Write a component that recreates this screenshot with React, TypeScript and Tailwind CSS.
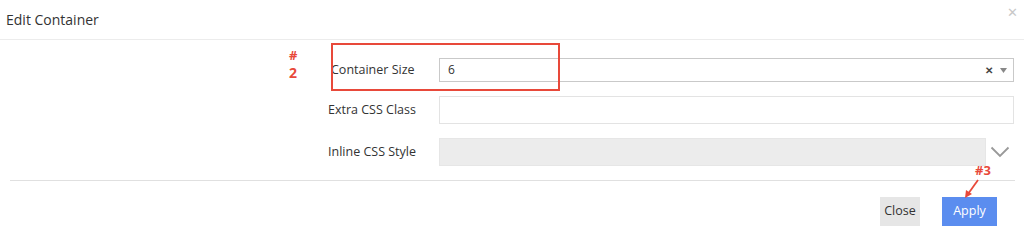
import React from "react";

export default function App() {
  return (
    <div className="relative w-[1024px] h-[243px] bg-white text-[#333] overflow-hidden" style={{ fontFamily: '"Open Sans", sans-serif' }}>
      {/* header */}
      <div className="h-[40px] border-b border-[#ececec] flex items-center pl-[6px] pr-[6px] justify-between">
        <span className="text-[14px] text-[#333] leading-none">Edit Container</span>
        <span className="text-[#c8c8c8] text-[13px] leading-none mt-[-14px]">✕</span>
      </div>

      {/* body */}
      <div className="flex flex-col gap-[14px] pt-[18px] pl-[328px] pr-[10px]">
        <div className="flex items-center h-[24px]">
          <div className="w-[111px] text-[12.5px] pl-[3px]">Container Size</div>
          <div className="flex-1 h-[24px] border border-[#c9c9c9] flex items-center pl-[8px] pr-[6px] text-[12px]">
            <span className="flex-1">6</span>
            <span className="text-[10px] font-bold text-[#444] mr-[7px] leading-none">✕</span>
            <svg width="7" height="5" viewBox="0 0 7 5"><path d="M0 0 L7 0 L3.5 5 Z" fill="#888" /></svg>
          </div>
        </div>
        <div className="flex items-center h-[28px]">
          <div className="w-[111px] text-[12.5px]">Extra CSS Class</div>
          <div className="flex-1 h-[28px] border border-[#e3e3e3]" />
        </div>
        <div className="flex items-center h-[28px]">
          <div className="w-[111px] text-[12.5px]">Inline CSS Style</div>
          <div className="flex-1 h-[28px] bg-[#ececec] border border-[#e6e6e6]" />
          <div className="w-[28px] flex justify-center">
            <svg width="20" height="12" viewBox="0 0 20 12"><path d="M1.5 1.5 L10 10 L18.5 1.5" stroke="#999" strokeWidth="1.8" fill="none" /></svg>
          </div>
        </div>
      </div>

      {/* divider */}
      <div className="mt-[14px] ml-[10px] mr-[9px] border-t border-[#e0e0e0]" />

      {/* footer */}
      <div className="flex justify-end gap-[22px] pt-[16px] pr-[27px]">
        <button className="h-[29px] w-[40px] bg-[#e6e6e6] text-[12.5px] text-[#333]">Close</button>
        <button className="h-[29px] w-[55px] bg-[#5b8def] text-[12.5px] text-white">Apply</button>
      </div>

      {/* annotations */}
      <div className="absolute left-[331px] top-[43px] w-[229px] h-[48px] border-2 border-[#e8493a]" />
      <div className="absolute left-[289px] top-[49px] text-[#e8493a] font-bold text-[13px] leading-[13px]">#</div>
      <div className="absolute left-[289px] top-[66px] text-[#e8493a] font-bold text-[14px] leading-[14px]">2</div>
      <div className="absolute left-[975px] top-[164px] text-[#e8493a] font-bold text-[13px] leading-none">#3</div>
      <svg className="absolute left-[962px] top-[178px]" width="20" height="22" viewBox="0 0 20 22">
        <path d="M16 2 L6 16" stroke="#e8493a" strokeWidth="1.8" fill="none" />
        <path d="M3 20 L4 12 L10 16 Z" fill="#e8493a" />
      </svg>
    </div>
  );
}
